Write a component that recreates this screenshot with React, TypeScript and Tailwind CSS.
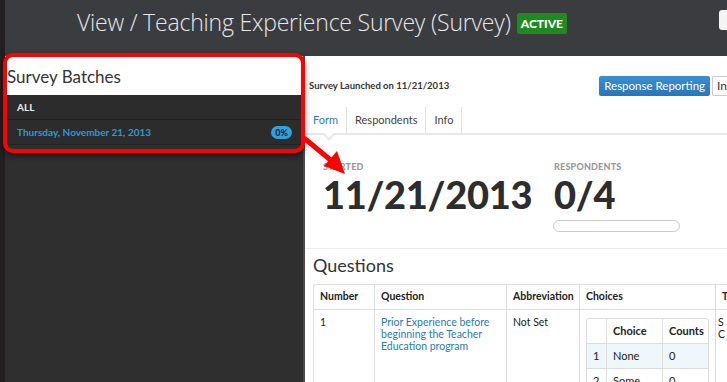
import { ReactNode } from 'react'

const FONT = { fontFamily: 'Lato, "Open Sans", sans-serif' }

export default function App() {
  return (
    <div className="relative flex h-[382px] w-[727px] overflow-hidden bg-[#231f20]" style={FONT}>
      <div className="w-[5px] shrink-0" />
      <div className="flex min-w-0 flex-1 flex-col">
        <Header />
        <div className="flex min-h-0 flex-1">
          <Sidebar />
          <div className="w-[2px] shrink-0 bg-[#4a4b4b]" />
          <Main />
        </div>
      </div>
      <Annotation />
    </div>
  )
}

function Header() {
  return (
    <div className="flex h-[56px] shrink-0 items-start bg-[#3a3c40] pl-[72px] pt-[7px]">
      <h1
        className="text-[23px] font-light leading-[30px] tracking-[-0.2px] text-[#e8e8e8]"
        style={{ fontFamily: '"Open Sans", Lato, sans-serif' }}
      >
        View / Teaching Experience Survey (Survey)
      </h1>
      <span className="ml-[6px] mt-[6px] rounded-[2px] bg-[#1f8a1f] px-[4px] py-[2px] text-[12px] font-black leading-[17px] text-white">
        ACTIVE
      </span>
      <div className="ml-auto mt-[3px] h-[20px] w-[8px] rounded-l-[3px] bg-[#f4f4f4]" />
    </div>
  )
}

function Sidebar() {
  return (
    <div className="w-[298px] shrink-0 bg-[#2e2f2e]">
      <div className="flex h-[39px] items-center bg-white pl-[2px] pt-[2px]">
        <span className="text-[17px] leading-none text-[#333]">Survey Batches</span>
      </div>
      <div className="flex h-[25px] items-center border-b border-[#222] bg-[#2b2c2b] pl-[12px]">
        <span className="text-[10px] font-bold text-[#eee]">ALL</span>
      </div>
      <div className="flex h-[25px] items-center justify-between border-b border-[#222] bg-[#2b2c2b] pl-[12px] pr-[11px]">
        <span className="text-[10px] font-bold text-[#2c9ad6]">Thursday, November 21, 2013</span>
        <span className="rounded-full bg-[#2ea2e0] px-[4px] text-[9px] font-black leading-[13px] text-[#1a2a33]">
          0%
        </span>
      </div>
    </div>
  )
}

function Main() {
  return (
    <div className="min-w-0 flex-1 bg-white">
      <div className="flex h-[51px] items-end pb-[11px] pl-[4px]">
        <span className="pb-[3px] text-[9.5px] font-bold text-[#333]">Survey Launched on 11/21/2013</span>
        <div className="ml-auto flex">
          <span className="rounded-[2px] bg-gradient-to-b from-[#3a8fd3] to-[#2a75b8] px-[5px] text-[11.5px] leading-[20px] text-white">
            Response Reporting
          </span>
          <span className="ml-[2px] rounded-l-[2px] border border-r-0 border-[#ccc] pl-[4px] text-[12px] leading-[18px] text-[#333]">
            In
          </span>
        </div>
      </div>
      <div className="relative flex h-[28px] border-b-2 border-[#e8e8e8]">
        <Tab active>Form</Tab>
        <Tab>Respondents</Tab>
        <Tab>Info</Tab>
        <div className="absolute bottom-[-6px] left-[20px] h-[8px] w-[8px] rotate-45 border-b-2 border-r-2 border-[#e8e8e8] bg-white" />
      </div>
      <div className="flex border-b border-[#ececec] pb-[16px] pl-[18px] pt-[26px]">
        <div className="w-[231px]">
          <Label>STARTED</Label>
          <Big>11/21/2013</Big>
        </div>
        <div>
          <Label>RESPONDENTS</Label>
          <Big>0/4</Big>
          <div className="ml-[-1px] mt-[7px] h-[12px] w-[127px] rounded-full border border-[#ccc]" />
        </div>
      </div>
      <div className="pl-[8px] pt-[4px]">
        <h2 className="text-[18px] leading-[24px] text-[#333]">Questions</h2>
        <div className="mt-[7px] overflow-hidden rounded-tl-[3px] border-l border-t border-[#ddd]">
          <div className="flex h-[25px] border-b border-[#ddd] text-[10.5px] font-bold text-[#222]">
            <Cell w="w-[61px]">Number</Cell>
            <Cell w="w-[132px]">Question</Cell>
            <Cell w="w-[73px]">Abbreviation</Cell>
            <Cell w="w-[136px]">Choices</Cell>
            <Cell w="w-[20px]">T</Cell>
          </div>
          <div className="flex text-[10.5px] text-[#222]">
            <Cell w="w-[61px]" top>1</Cell>
            <Cell w="w-[132px]" top>
              <span className="text-[#2a7ab8]">Prior Experience before beginning the Teacher Education program</span>
            </Cell>
            <Cell w="w-[73px]" top>Not Set</Cell>
            <div className="w-[136px] shrink-0 border-r border-[#ddd] pl-[6px] pt-[8px]">
              <ChoiceTable />
            </div>
            <div className="pl-[2px] pt-[6px] leading-[12px]">
              S<br />C
            </div>
          </div>
        </div>
      </div>
    </div>
  )
}

function Tab({ children, active }: { children: ReactNode; active?: boolean }) {
  return (
    <div
      className={`flex items-center border-r border-[#e3e3e3] px-[8px] text-[11px] ${
        active ? 'text-[#2d7cc0]' : 'text-[#444]'
      }`}
    >
      {children}
    </div>
  )
}

function Label({ children }: { children: ReactNode }) {
  return <p className="text-[9px] font-black leading-[12px] tracking-[0.2px] text-[#9a9a9a]">{children}</p>
}

function Big({ children }: { children: ReactNode }) {
  return <p className="mt-[2px] text-[38px] font-black leading-[38px] tracking-[-0.3px] text-[#2d2d2d]">{children}</p>
}

function Cell({ children, w, top }: { children: ReactNode; w: string; top?: boolean }) {
  return (
    <div
      className={`${w} shrink-0 border-r border-[#ddd] px-[6px] ${
        top ? 'pt-[6px] leading-[12px]' : 'flex items-center'
      }`}
    >
      {children}
    </div>
  )
}

function ChoiceTable() {
  const rows = [
    ['1', 'None', '0'],
    ['2', 'Some', '0'],
  ]
  return (
    <div className="w-[123px] overflow-hidden rounded-t-[3px] border border-[#ddd] text-[11px] text-[#222]">
      <div className="flex h-[25px] border-b border-[#ddd] font-bold">
        <div className="w-[20px] border-r border-[#ddd]" />
        <div className="flex w-[56px] items-center border-r border-[#ddd] pl-[6px]">Choice</div>
        <div className="flex items-center pl-[6px]">Counts</div>
      </div>
      {rows.map(([n, c, v], i) => (
        <div key={n} className={`flex h-[25px] border-b border-[#ddd] ${i === 0 ? 'bg-[#eef7fa]' : ''}`}>
          <div className="flex w-[20px] items-center border-r border-[#ddd] pl-[6px]">{n}</div>
          <div className="flex w-[56px] items-center border-r border-[#ddd] pl-[6px]">{c}</div>
          <div className="flex items-center pl-[6px]">{v}</div>
        </div>
      ))}
    </div>
  )
}

function Annotation() {
  return (
    <>
      <div className="pointer-events-none absolute left-[3px] top-[53px] h-[100px] w-[302px] rounded-[10px] border-[4px] border-[#f00] shadow-[0_3px_6px_rgba(0,0,0,0.45)]" />
      <svg className="pointer-events-none absolute left-0 top-0" width="727" height="382">
        <line x1="304" y1="138" x2="333" y2="162" stroke="#f00" strokeWidth="5" />
        <polygon points="345,174 324,166 337,151" fill="#f00" />
      </svg>
    </>
  )
}
